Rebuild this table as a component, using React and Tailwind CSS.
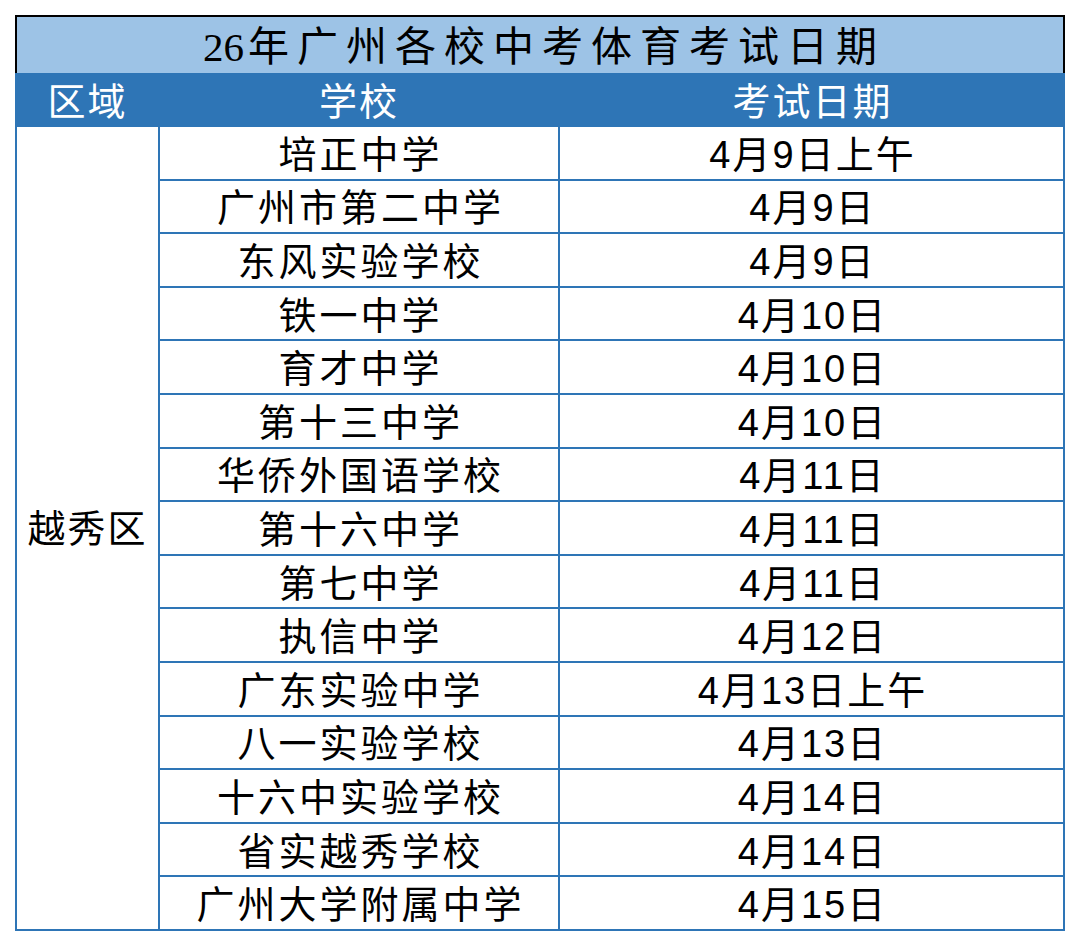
import React from 'react'

const rows = [
  ['培正中学', '4月9日上午'],
  ['广州市第二中学', '4月9日'],
  ['东风实验学校', '4月9日'],
  ['铁一中学', '4月10日'],
  ['育才中学', '4月10日'],
  ['第十三中学', '4月10日'],
  ['华侨外国语学校', '4月11日'],
  ['第十六中学', '4月11日'],
  ['第七中学', '4月11日'],
  ['执信中学', '4月12日'],
  ['广东实验中学', '4月13日上午'],
  ['八一实验学校', '4月13日'],
  ['十六中实验学校', '4月14日'],
  ['省实越秀学校', '4月14日'],
  ['广州大学附属中学', '4月15日'],
]

const sans = "font-['Liberation_Sans','Noto_Sans_CJK_SC',sans-serif]"

const App = () => {
  return (
    <div className="w-[1080px] h-[945px] bg-white pt-[15px] pl-[15px]">
      <div className="w-[1050px]">
        <div className="h-[58px] bg-[#9dc3e6] border-t-2 border-x-2 border-black flex items-center justify-center pt-[4px]">
          <span className="font-['Liberation_Serif','Noto_Sans_CJK_SC',serif] text-[41px] leading-none text-black pl-[8px]">
            <span className="mr-[4px]">26</span>
            <span className="tracking-[8px]">年广州各校中考体育考试日期</span>
          </span>
        </div>

        <div className={`h-[54px] bg-[#2e75b6] grid grid-cols-[143px_400px_1fr] items-center text-white text-[38px] leading-none tracking-[2px] pt-[3px] ${sans}`}>
          <div className="text-center pl-[2px]">区域</div>
          <div className="text-center pl-[2px]">学校</div>
          <div className="text-center pl-[2px]">考试日期</div>
        </div>

        <div className={`flex text-black text-[38px] leading-none ${sans}`}>
          <div className="w-[143px] border-l-2 border-b-2 border-[#2e75b6] flex items-center justify-center tracking-[2px] pt-[3px]">
            越秀区
          </div>
          <div className="flex-1 flex flex-col">
            {rows.map((r, i) => (
              <div key={i} className="h-[53.6px] grid grid-cols-[400px_1fr] border-b-2 border-[#2e75b6]">
                <div className="border-l-2 border-[#2e75b6] flex items-center justify-center tracking-[3px] pl-[3px] pt-[4px]">
                  {r[0]}
                </div>
                <div className="border-x-2 border-[#2e75b6] flex items-center justify-center tracking-[2px] pl-[2px] pt-[4px]">
                  {r[1]}
                </div>
              </div>
            ))}
          </div>
        </div>
      </div>
    </div>
  )
}

export default App
